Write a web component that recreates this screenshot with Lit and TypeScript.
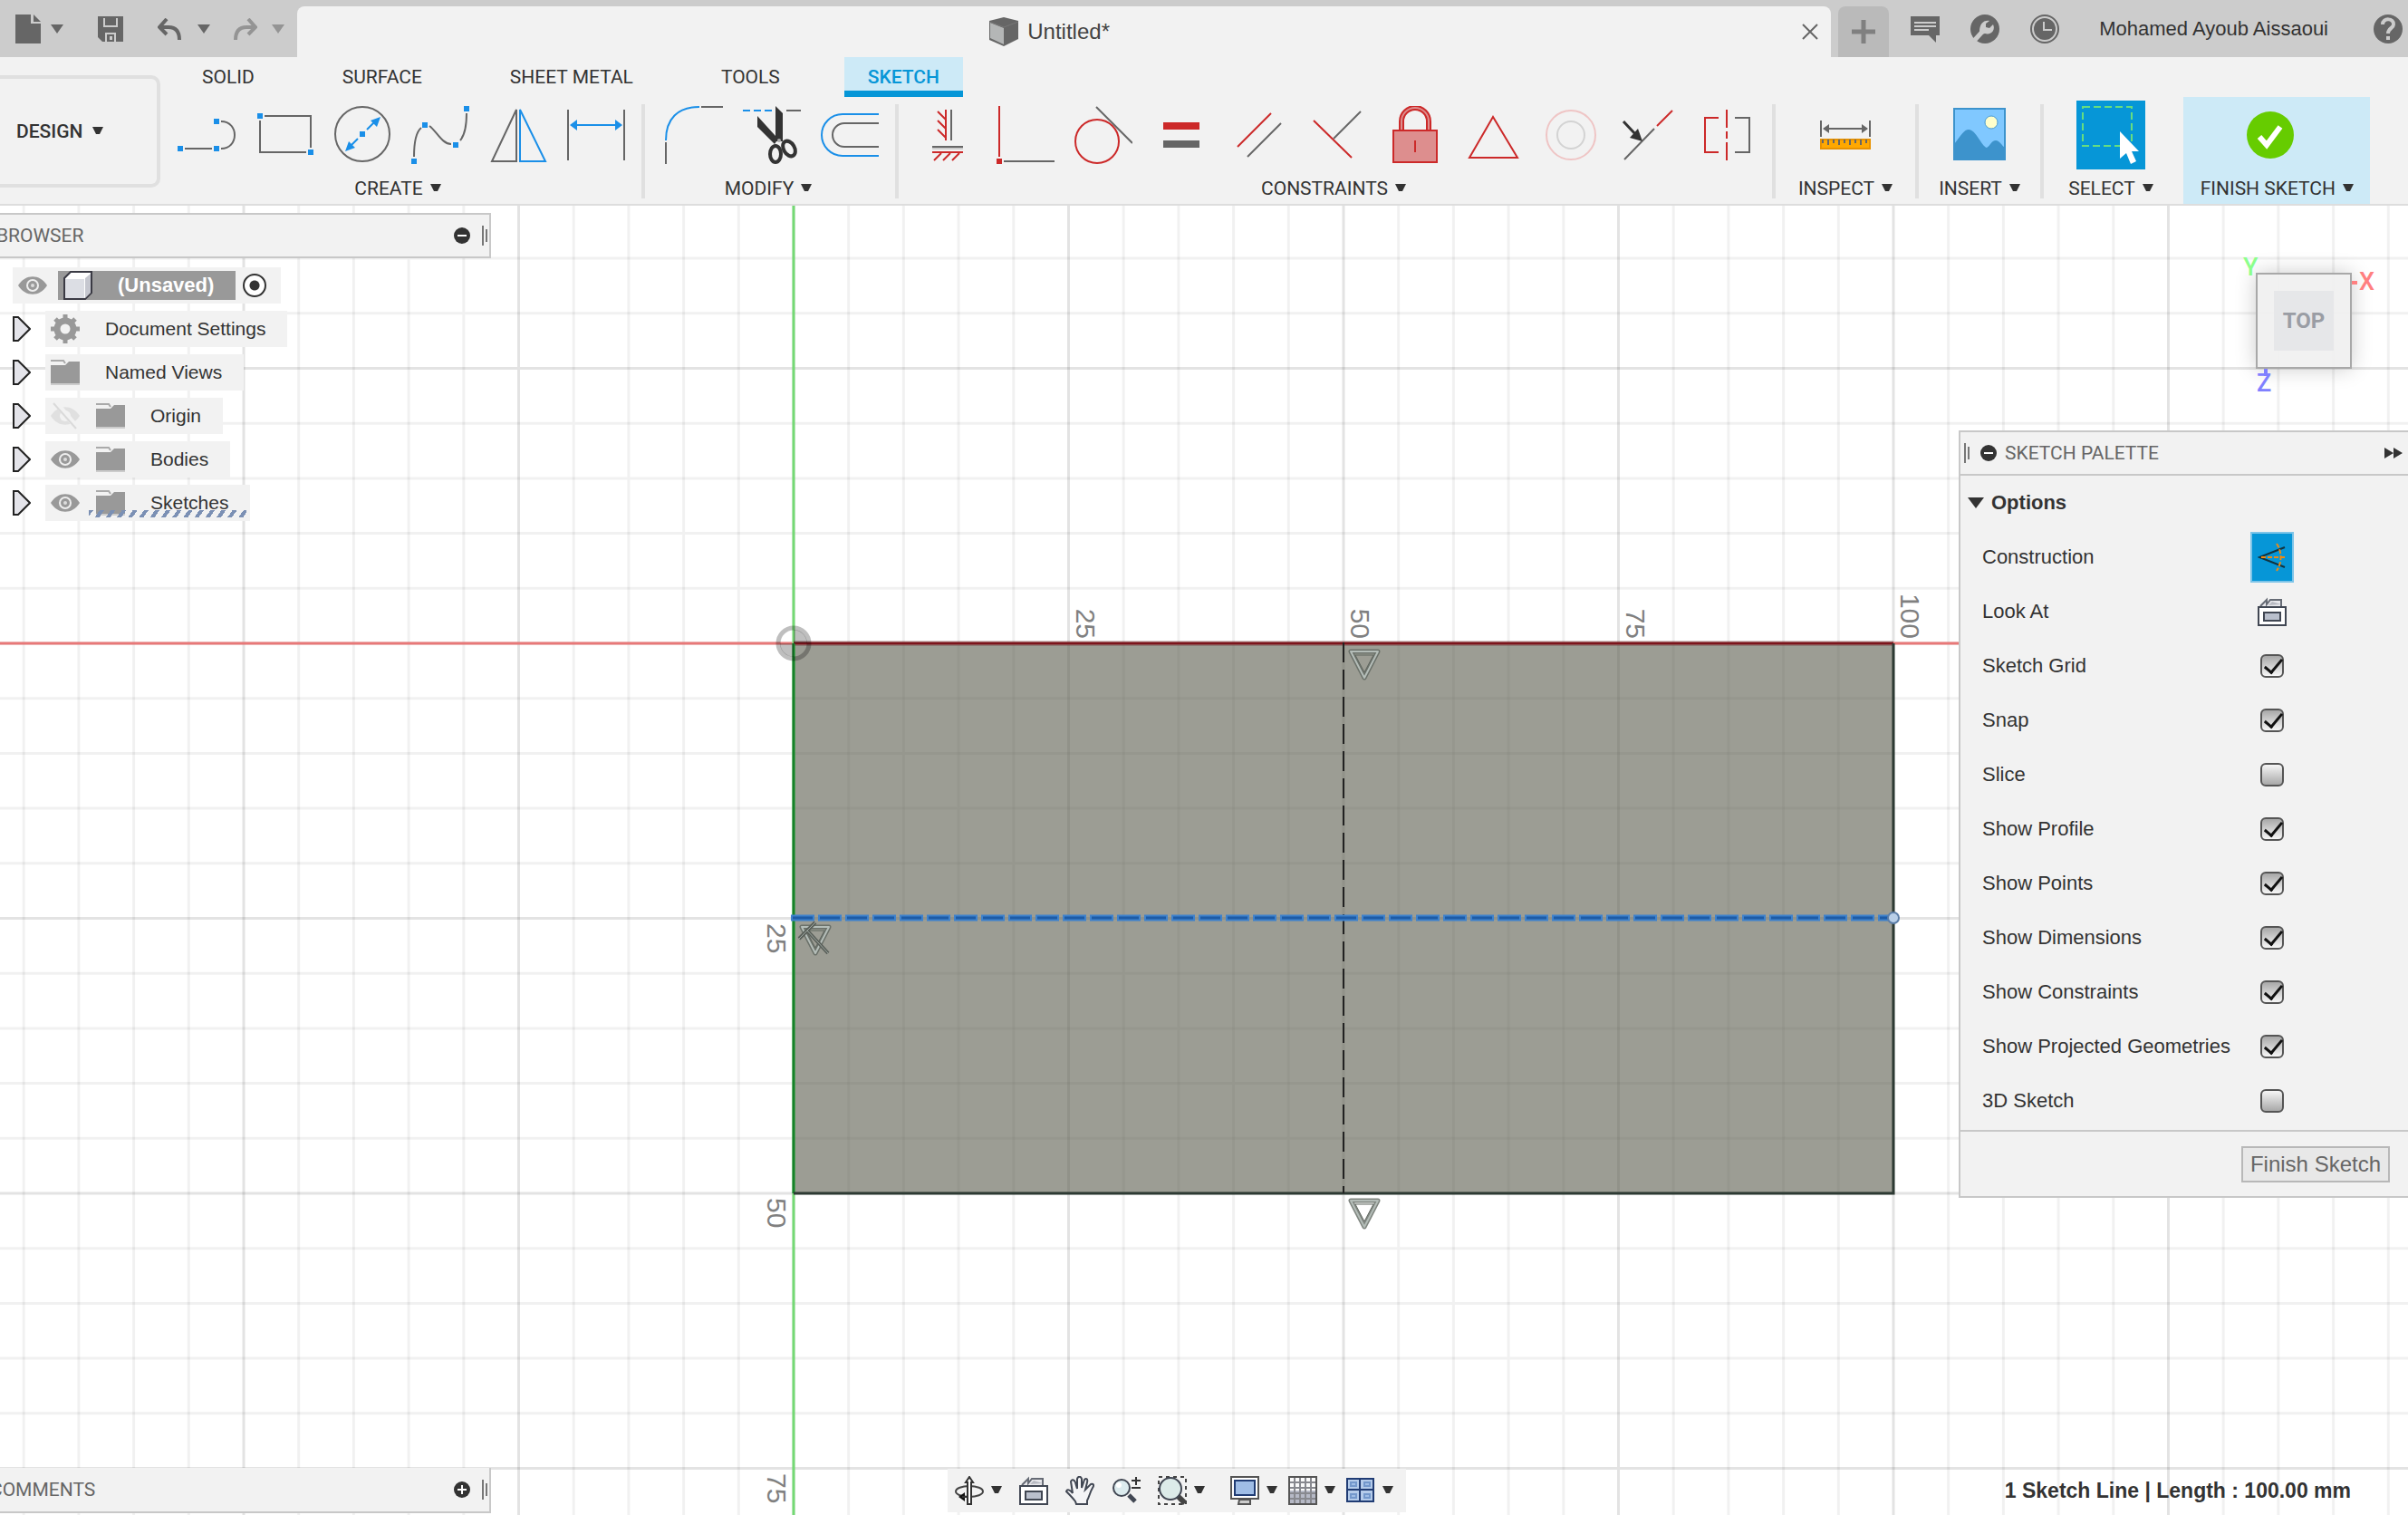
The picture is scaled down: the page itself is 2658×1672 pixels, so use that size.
import { LitElement, html, svg, css, nothing } from "lit";
import { customElement } from "lit/decorators.js";
import { classMap } from "lit/directives/class-map.js";

const G = "#666";
const B = "#1a8fe8";
const R = "#cc2929";
const D = "#333";

const sq = (x: number, y: number, c = B) => svg`<rect x=${x - 3} y=${y - 3} width="6" height="6" fill=${c} />`;

const toolArt: Record<string, unknown> = {
  line: svg`<path d="M8 47H38M48 17C68 17 68 47 48 47" fill="none" stroke=${G} stroke-width="2"/>${sq(3, 47)}${sq(43, 47)}${sq(43, 17)}`,
  rect: svg`<path d="M10 11H61V46M56 51H5V16" fill="none" stroke=${G} stroke-width="2"/>${sq(5, 11)}${sq(61, 51)}`,
  circle: svg`<circle cx="32" cy="31" r="30" fill="none" stroke=${G} stroke-width="2"/>
    <path d="M37 26L46 17M27 36L18 45" stroke=${B} stroke-width="2"/><path d="M52 12L41 16L48 23ZM13 50L17 39L24 46Z" fill=${B}/>${sq(32, 31)}`,
  spline: svg`<path d="M3 56C3 40 6 28 11 24M20 22C28 28 34 42 44 42M54 38C59 32 61 20 61 8" fill="none" stroke=${G} stroke-width="2"/>${sq(3, 61)}${sq(15, 21)}${sq(49, 43)}${sq(61, 3)}`,
  mirror: svg`<path d="M30 4L3 61H30Z" fill="none" stroke=${G} stroke-width="2"/><path d="M34 4V61H62Z" fill="none" stroke=${B} stroke-width="2"/>`,
  dimension: svg`<path d="M1 4V60M63 4V60" stroke=${G} stroke-width="2"/><path d="M6 21H58" stroke=${B} stroke-width="2"/><path d="M3 21L11 15V27ZM61 21L53 15V27Z" fill=${B}/>`,
  fillet: svg`<path d="M1 38C1 14 14 1 38 1" fill="none" stroke=${B} stroke-width="2"/><path d="M40 1H64M1 40V64" stroke=${G} stroke-width="2"/>`,
  trim: svg`<path d="M0 5H32" stroke=${B} stroke-width="2" stroke-dasharray="8 4"/><path d="M48 5H64" stroke=${G} stroke-width="2"/>
    <path d="M36 0L44 8V39H37L35 42L16 23V11L36 33Z" fill=${D}/><ellipse cx="36" cy="53" rx="6" ry="9" fill="none" stroke=${D} stroke-width="4"/>
    <ellipse cx="51" cy="47" rx="6" ry="9" transform="rotate(-30 51 47)" fill="none" stroke=${D} stroke-width="4"/><circle cx="40" cy="38" r="2" fill="#aaa"/>`,
  offset: svg`<path d="M64 9H24A23 23 0 0 0 24 55H64" fill="none" stroke=${B} stroke-width="2"/><path d="M64 19H26A13 13 0 0 0 26 45H64" fill="none" stroke=${G} stroke-width="2"/>`,
  horizVert: svg`<path d="M30 4V38M21 6L30 15M21 16L30 25M21 26L30 35M15 51H49M25 52L17 60M35 52L27 60M45 52L37 60" stroke=${R} stroke-width="2"/><path d="M15 47H49" stroke="#ccc" stroke-width="2"/><path d="M36 4V38M15 45H49" stroke=${G} stroke-width="2"/>`,
  coincident: svg`<path d="M3 0V56" stroke=${R} stroke-width="2"/><path d="M8 61H64" stroke=${G} stroke-width="2"/>${sq(3, 61, R)}`,
  tangent: svg`<circle cx="25" cy="39" r="24" fill="none" stroke=${R} stroke-width="2"/><path d="M24 1L64 41" stroke=${G} stroke-width="2"/>`,
  equal: svg`<path d="M12 22H52" stroke=${R} stroke-width="8"/><path d="M12 42H52" stroke=${G} stroke-width="8"/>`,
  parallel: svg`<path d="M8 45L45 8" stroke=${R} stroke-width="2"/><path d="M19 56L56 19" stroke=${G} stroke-width="2"/>`,
  perpendicular: svg`<path d="M6 16L48 57" stroke=${R} stroke-width="2"/><path d="M28 36L58 6" stroke=${G} stroke-width="2"/>`,
  lock: svg`<path d="M17 27V17A15 15 0 0 1 47 17V27" fill="none" stroke=${R} stroke-width="6"/><path d="M17 27V17A15 15 0 0 1 47 17V27" fill="none" stroke="#dd8e8e" stroke-width="2"/>
    <rect x="8" y="27" width="48" height="35" fill="#dd8e8e" stroke=${R} stroke-width="2"/><path d="M32 38V51" stroke=${R} stroke-width="2"/>`,
  triangle: svg`<path d="M32 12L6 57H59Z" fill="none" stroke=${R} stroke-width="2"/>`,
  concentric: svg`<circle cx="32" cy="32" r="27" fill="none" stroke="#efc5c5" stroke-width="2"/><circle cx="32" cy="32" r="15" fill="none" stroke="#d3d3d3" stroke-width="2"/>`,
  midpoint: svg`<path d="M5 59L38 25" stroke=${G} stroke-width="2"/><path d="M41 22L58 5" stroke=${R} stroke-width="2"/><path d="M4 17L18 32" stroke=${D} stroke-width="3"/><path d="M25 39L11 35L20 25Z" fill=${D}/>`,
  symmetry: svg`<path d="M23 13H8V51H23M32 4V24M32 28V36M32 40V60" fill="none" stroke=${R} stroke-width="2"/><path d="M41 13H57V51H41" fill="none" stroke=${G} stroke-width="2"/>`,
  measure: svg`<path d="M5 16V34M59 16V34M8 25H56" stroke=${G} stroke-width="2"/><path d="M7 25L14 20V30ZM57 25L50 20V30Z" fill=${G}/><rect x="5" y="37" width="54" height="10" fill="#ffa800" stroke="#e89200" stroke-width="2"/>
    <path d="M7 37V41M13 37V43M19 37V41M25 37V43M31 37V41M37 37V43M43 37V41M49 37V43M55 37V41" stroke=${G} stroke-width="2"/>`,
  picture: svg`<rect x="4" y="3" width="56" height="56" fill="#80c8ff" stroke="#3d93cc" stroke-width="2"/><circle cx="45" cy="18" r="7" fill="#ffffcc" stroke="#4d9bd0" stroke-width="1"/>
    <path d="M4 42C12 32 15 26 20 26C28 26 34 44 40 46C44 44 45 38 50 38C54 38 57 44 60 46V60H4Z" fill="#3d93cc"/>`,
  finish: svg`<circle cx="32" cy="32" r="26" fill="#66cc00"/><path d="M20 34L28 43L43 23" fill="none" stroke="#fff" stroke-width="6"/>`,
};

const tool = (name: string, title: string) => html`<button class="tool" title=${title} aria-label=${title}><svg width="64" height="64" viewBox="0 0 64 64">${toolArt[name]}</svg></button>`;
const caret = html`<svg class="caret" width="12" height="10" viewBox="0 0 12 10"><path d="M0 0H12L8 8H4Z" fill="currentColor"/></svg>`;

const arrowDown = html`<svg width="14" height="10" viewBox="0 0 14 10"><path d="M0 0H14L7 10Z" fill="currentColor"/></svg>`;

const eye = svg`<path d="M0 16C8 3 24 3 32 16C24 29 8 29 0 16Z" fill="#999"/><circle cx="16" cy="16" r="7" fill="#eee"/><circle cx="16" cy="16" r="5" fill="#999"/><circle cx="16" cy="16" r="2" fill="#ddd"/>`;
const treeArt: Record<string, unknown> = {
  eye,
  hidden: svg`<path d="M0 16C8 3 24 3 32 16C24 29 8 29 0 16Z" fill="#e0e0e0"/><circle cx="16" cy="16" r="6" fill="#f2f2f2"/><path d="M6 2L30 30" stroke="#f2f2f2" stroke-width="6"/><path d="M3 2L28 30" stroke="#dadada" stroke-width="2"/>`,
  gear: svg`<circle cx="16" cy="16" r="9" fill="none" stroke="#999" stroke-width="7"/><path d="M16 0V5M16 27V32M0 16H5M27 16H32M5 5L8 8M24 24L27 27M27 5L24 8M5 27L8 24" stroke="#999" stroke-width="5"/>`,
  folder: svg`<path d="M0 3H14L16 6" fill="none" stroke="#aaa" stroke-width="2"/><path d="M0 8H16L20 4H32V28H0Z" fill="#999"/><path d="M0 29H32" stroke="#ccc" stroke-width="2"/>`,
  cube: svg`<path d="M1 8L8 1H31V24L24 31H1Z" fill="#fff" stroke="#3a3a44" stroke-width="2"/><path d="M2 9H23V30H2Z" fill="#dcdee4"/><path d="M24 8L30 3V24L24 30Z" fill="#c5c7cf"/>`,
};
const tIcon = (n: string) => html`<svg width="32" height="32" viewBox="0 0 32 32">${treeArt[n]}</svg>`;

const lookAt = svg`<path d="M3 10L10 3V8L14 3H26V10" fill="#e8e8ec" stroke="#666b75" stroke-width="2"/><path d="M12 9L16 5L26 8" fill="#b8bac2"/><rect x="1" y="11" width="30" height="20" fill="#fff" stroke="#414753" stroke-width="2"/><rect x="7" y="17" width="18" height="9" fill="#b9bfcc" stroke="#414753" stroke-width="2"/>`;

const navArt: Record<string, unknown> = {
  orbit: svg`<ellipse cx="16" cy="17" rx="15" ry="6" fill="none" stroke="#444" stroke-width="2"/><path d="M14 31V7H12L16 1L20 7H18V31Z" fill="#fff" stroke="#333" stroke-width="2"/><path d="M4 23L11 18V28Z" fill="#111"/><path d="M8 23H13" stroke="#333" stroke-width="2"/>`,
  look: lookAt,
  pan: svg`<path d="M11 28C8 24 4 20 1 17C2 14 5 15 8 19L6 6C7 3 10 4 11 7L13 14V3C14 0 17 0 18 3V13L21 4C23 2 25 3 24 7L22 15L28 9C31 8 32 10 30 13C27 18 26 24 24 27V31H12Z" fill="#f4f4f6" stroke="#414753" stroke-width="2"/>`,
  zoom: svg`<path d="M19 21L26 28" stroke="#414753" stroke-width="5"/><circle cx="11" cy="13" r="9" fill="#dcebee" stroke="#414753" stroke-width="2"/><circle cx="8" cy="10" r="3" fill="#fff"/><path d="M27 1V10M22 5H32M22 13H32" stroke="#333" stroke-width="2"/>`,
  window: svg`<rect x="1" y="1" width="30" height="30" fill="none" stroke="#444" stroke-width="2" stroke-dasharray="4 4"/><path d="M22 22L30 30" stroke="#444" stroke-width="6"/><circle cx="14" cy="14" r="12" fill="#dcebe9" stroke="#414753" stroke-width="2"/>`,
  display: svg`<path d="M10 26H22V31H9Z" fill="#ccc" stroke="#555" stroke-width="2"/><rect x="1" y="1" width="30" height="24" fill="#fff" stroke="#555" stroke-width="2"/><rect x="5" y="5" width="22" height="16" fill="#9fbde6" stroke="#203c74" stroke-width="2"/>`,
  grid: svg`<rect x="1" y="1" width="30" height="30" fill="#fafafa" stroke="#555" stroke-width="2"/><path d="M2 16H30V30H2Z" fill="#b6b9c6"/><path d="M7 2V30M13 2V30M19 2V30M25 2V30M2 7H30M2 13H30M2 19H30M2 25H30" stroke="#88898f" stroke-width="2"/>`,
  views: svg`<rect x="1" y="3" width="29" height="25" fill="#b4cbea" stroke="#203c74" stroke-width="2"/><path d="M15 3V28M1 15H30" stroke="#203c74" stroke-width="2"/><path d="M5 7H11V11H5ZM20 7H26V11H20ZM5 20H11V24H5ZM20 20H26V24H20Z" fill="#9fbde6" stroke="#7398cc" stroke-width="2"/>`,
};
const nav = (n: string, title: string, menu = false) => html`<button class="nav-btn" title=${title} aria-label=${title}>
  <svg width="32" height="32" viewBox="0 0 32 32">${navArt[n]}</svg>${menu ? caret : nothing}</button>`;

const minus = html`<svg width="18" height="18" viewBox="0 0 18 18"><circle cx="9" cy="9" r="9" fill="#333"/><path d="M4 9H14" stroke="#fff" stroke-width="2"/></svg>`;
const plus = html`<svg width="18" height="18" viewBox="0 0 18 18"><circle cx="9" cy="9" r="9" fill="#333"/><path d="M4 9H14M9 4V14" stroke="#fff" stroke-width="2"/></svg>`;
const grip = html`<svg class="grip" width="6" height="22" viewBox="0 0 6 22"><path d="M1 0V22M5 4V18" stroke="#777" stroke-width="2"/></svg>`;

const UNIT = 303.5 / 25;

const glyphTriangle = (x: number, y: number) => svg`<g transform="translate(${x} ${y})">
  <path d="M2 2H32L17 31Z" fill="none" stroke="#5f665f" stroke-opacity=".8" stroke-width="5" stroke-linejoin="round"/>
  <path d="M2 2H32L17 31Z" fill="none" stroke="#b4bdb8" stroke-width="2" stroke-linejoin="round"/>
  <path d="M7 6H27L17 25Z" fill="none" stroke="#5f665f" stroke-width="1"/></g>`;

@customElement("sketch-canvas")
export class SketchCanvas extends LitElement {
  static styles = css`
    :host { display: block; overflow: hidden; background: #fff; }
    svg { display: block; width: 100%; height: 100%; }
    .mark { font-family: "Liberation Sans", Arial, sans-serif; font-size: 30px; fill: #808080; }
  `;

  render() {
    const minor: unknown[] = [];
    const major: unknown[] = [];
    for (let i = -40; i <= 60; i++) {
      const p = i * 5 * UNIT;
      (i % 5 === 0 ? major : minor).push(svg`<path d="M${p} -2000V4000M-3000 ${p}H5000"/>`);
    }
    const w = 100 * UNIT;
    const h = 50 * UNIT;
    return html`<svg role="img" aria-label="Sketch">
      <g transform="translate(876 483)">
        <g stroke="#000" stroke-opacity=".055" stroke-width="3">${minor}</g>
        <g stroke="#000" stroke-opacity=".11" stroke-width="3">${major}</g>
        <rect width=${w} height=${h} fill="#5a5c4c" fill-opacity=".6"/>
        <path d="M-3000 0H5000" stroke="#e87878" stroke-width="3"/>
        <path d="M0 -2000V4000" stroke="#74d974" stroke-width="3"/>
        <path d="M0 0H${w}" stroke="#5a1a1e" stroke-opacity=".5" stroke-width="5"/>
        <path d="M0 0H${w}" stroke="#7c141c" stroke-width="2"/>
        <path d="M0 0V${h}" stroke="#16802a" stroke-width="3"/>
        <path d="M0 ${h}H${w}V0" fill="none" stroke="#2d3a33" stroke-width="3"/>
        <path d="M607 -1V${h}" stroke="#222" stroke-width="2" stroke-dasharray="22 8"/>
        <circle r="17" fill="none" stroke="#000" stroke-opacity=".25" stroke-width="5"/>
        <path d="M0 0V-15A15 15 0 0 1 15 0ZM0 0V15A15 15 0 0 1 -15 0Z" fill="#000" fill-opacity=".25"/>
        <path d="M-3 303H${w}" stroke="#3f82cc" stroke-width="7" stroke-dasharray="26 4"/>
        <path d="M-1 303H${w}" stroke="#1d5ba6" stroke-width="3" stroke-dasharray="22 8"/>
        <circle cx=${w} cy="303" r="6" fill="#b9cfe8" stroke="#5c7ea8" stroke-width="2"/>
        ${glyphTriangle(613, 7)}${glyphTriangle(613, 613)}${glyphTriangle(7, 311)}
        <path d="M6 326L24 308M15 317L38 342" stroke="#5a605a" stroke-width="4"/>
        <path d="M6 326L24 308M15 317L38 342" stroke="#9aa39d" stroke-width="1"/>
        ${[25, 50, 75, 100].map((n) => svg`<text class="mark" text-anchor="end" transform="translate(${Math.round(n * UNIT) + 8} -5) rotate(90)">${n}</text>`)}
        ${[25, 50, 75].map((n) => svg`<text class="mark" transform="translate(-29 ${Math.round(n * UNIT) + 5}) rotate(90)">${n}</text>`)}
      </g></svg>`;
  }
}

const options: [string, boolean][] = [
  ["Sketch Grid", true], ["Snap", true], ["Slice", false], ["Show Profile", true], ["Show Points", true],
  ["Show Dimensions", true], ["Show Constraints", true], ["Show Projected Geometries", true], ["3D Sketch", false],
];

const tree: { name: string; icons: string[]; active?: boolean }[] = [
  { name: "Document Settings", icons: ["gear"] },
  { name: "Named Views", icons: ["folder"] },
  { name: "Origin", icons: ["hidden", "folder"] },
  { name: "Bodies", icons: ["eye", "folder"] },
  { name: "Sketches", icons: ["eye", "folder"], active: true },
];

@customElement("app-root")
export class AppRoot extends LitElement {
  static styles = css`
    :host { display: flex; flex-direction: column; min-height: 100vh; overflow: hidden; font-family: "Liberation Sans", Arial, sans-serif; font-size: 21px; line-height: 24px; color: #333; background: #f2f2f2; }
    * { box-sizing: border-box; }
    button { font: inherit; color: inherit; background: none; border: 0; padding: 0; margin: 0; }
    svg { display: block; flex: none; }
    .caps { font-family: Roboto, "Liberation Sans", sans-serif; font-size: 21px; white-space: nowrap; }

    .titlebar { display: flex; height: 63px; background: #ccc; color: #666; }
    .quick { display: flex; align-items: center; width: 328px; padding-left: 17px; flex: none; }
    .quick button { display: flex; align-items: center; gap: 11px; margin-right: 38px; }
    .quick .undo { margin-right: 26px; gap: 18px; }
    .quick .redo { margin-right: 0; color: #949494; gap: 16px; }
    .doc { display: flex; align-items: center; flex: 1; margin-top: 7px; border-radius: 8px 8px 0 0; background: #f2f2f2; padding-right: 14px; }
    .doc-name { flex: 1; display: flex; align-items: center; justify-content: center; gap: 10px; font-size: 24px; color: #444; }
    .new-doc { display: grid; place-items: center; width: 56px; margin: 7px 0 0 8px; border-radius: 8px 8px 0 0; background: #bababa; }
    .account { display: flex; align-items: center; gap: 34px; padding: 0 6px 0 24px; }
    .account .user { margin: 0 0 0 10px; color: #333; font-size: 22px; white-space: nowrap; }

    .ribbon { display: flex; align-items: flex-start; border-bottom: 2px solid #ddd; height: 164px; }
    .workspace { display: flex; align-items: center; gap: 11px; width: 177px; height: 124px; margin: 20px 8px 0 0; padding-left: 18px; border: 4px solid #e0e0e0; border-left: 0; border-radius: 0 10px 10px 0; flex: none; font-weight: 500; }
    .ribbon-main { flex: 1; min-width: 0; }
    .tabs { display: flex; gap: 45px; padding-left: 12px; height: 44px; }
    .tabs button { padding: 6px 26px 0; border-bottom: 7px solid transparent; }
    .tabs .on { background: #cdeaf7; color: #0696d7; border-bottom-color: #0696d7; font-weight: 500; }
    .groups { display: flex; height: 118px; }
    .group { position: relative; display: flex; flex-direction: column; align-items: center; justify-content: space-between; padding: 10px 18px 4px 4px; }
    .group.first { padding-left: 0; }
    .group.short { padding: 10px 4px 4px 0; }
    .group::after { content: ""; position: absolute; right: 7px; top: 8px; width: 4px; height: 104px; background: #e0e0e0; }
    .group.short::after { right: 0; }
    .group.last::after { display: none; }
    .row { display: flex; height: 64px; align-items: center; }
    .tool { display: grid; place-items: center; width: 86px; height: 64px; }
    .menu { display: flex; align-items: center; gap: 8px; height: 26px; margin-right: 8px; }
    .short .menu { margin-right: 0; }
    .inspect { width: 158px; margin-left: -7px; }
    .insert { width: 138px; }
    .select { width: 152px; }
    .finish { width: 206px; margin-left: 2px; background: #cdeaf7; }
    .group.finish { padding: 10px 14px 4px 0; }
    .group.finish .menu { align-self: flex-end; margin-right: 4px; }
    .caret { color: #333; }

    .stage { position: relative; flex: 1; display: flex; flex-direction: column; justify-content: space-between; }
    sketch-canvas { position: absolute; inset: 0; }
    .upper { position: relative; display: flex; justify-content: space-between; align-items: flex-start; }
    .left { width: 542px; padding-top: 8px; }
    .bar { display: flex; align-items: center; height: 50px; width: 542px; gap: 13px; padding-right: 2px; background: #f2f2f2; border: 2px solid #c8c8c8; border-left: 0; color: #666; overflow: hidden; }
    .bar h2 { flex: 1; margin: 0 0 0 -4px; font-weight: 400; }
    .tree { list-style: none; margin: 10px 0 0; padding: 0 0 0 14px; display: flex; flex-direction: column; gap: 8px; }
    .tree li { display: flex; align-items: center; height: 40px; }
    .chip { position: relative; display: flex; align-items: center; gap: 18px; height: 40px; padding: 0 24px 0 6px; background: #f2f2f2; }
    .chip .name { margin-left: 10px; }
    .expand { width: 36px; }
    .chip.root { gap: 12px; padding-right: 16px; }
    .doc-chip { display: flex; align-items: center; gap: 28px; height: 32px; padding: 0 24px 0 6px; background: #999; color: #fff; font-weight: 700; font-size: 22px; }
    input { appearance: none; margin: 0; flex: none; }
    .activate { width: 26px; height: 26px; margin-left: -4px; border: 2px solid #333; border-radius: 50%; background: radial-gradient(circle, #333 5px, #fff 6px); }
    .squiggle { position: absolute; left: 48px; right: 4px; bottom: 4px; height: 8px; background: repeating-linear-gradient(125deg, #7b90b4 0 4px, transparent 4px 10px); }

    .right { display: flex; flex-direction: column; align-items: flex-end; width: 496px; padding-top: 74px; }
    .viewcube { position: relative; width: 106px; height: 106px; margin-right: 62px; display: grid; place-items: center; background: #f0f0f0e6; border: 2px solid #a8a8a8; box-shadow: 0 0 22px #0003; }
    .face { display: grid; place-items: center; width: 66px; height: 66px; background: #e6e7e9; color: #9a9da4; font: 700 24px/24px Roboto, sans-serif; }
    .axis { position: absolute; font: 500 27px/28px Roboto, sans-serif; }
    .ax-y { left: -16px; top: -22px; color: #8cff8c; }
    .ax-x { left: 112px; top: -6px; color: #ff8080; }
    .ax-x::before { content: ""; position: absolute; left: -8px; top: 13px; width: 6px; height: 4px; background: #ff8080; }
    .ax-z { left: -1px; top: 106px; color: #8080ff; }
    .ax-z::before { content: ""; position: absolute; left: 8px; top: -2px; width: 4px; height: 8px; background: #8080ff; }
    .palette { width: 496px; margin-top: 68px; background: #f2f2f2; border: 2px solid #c8c8c8; border-right: 0; }
    .palette header { display: flex; align-items: center; height: 48px; padding: 0 6px 0 4px; border-bottom: 2px solid #c8c8c8; color: #666; }
    .palette header .caps { flex: 1; margin: 0 0 0 9px; font-weight: 400; }
    .palette header .grip { margin-right: 12px; }
    .fold { display: flex; align-items: center; gap: 8px; height: 60px; padding-left: 8px; font-weight: 700; font-size: 22px; }
    .opt { display: grid; grid-template-columns: 1fr 48px 126px; align-items: center; height: 60px; padding-left: 24px; font-size: 22px; justify-items: center; }
    .opt label, .opt span { justify-self: start; }
    .opt button { display: grid; place-items: center; width: 48px; height: 56px; }
    .opt .toggled { background: #0696d7; border: 2px solid #7dc4e8; }
    .check { position: relative; width: 26px; height: 26px; border: 2px solid #555; border-radius: 6px; background: linear-gradient(#f6f6f6, #a8a8a8); }
    .check:checked { background: linear-gradient(#a8a8a8, #f6f6f6); }
    .check:checked::before { content: ""; position: absolute; left: 7px; top: -1px; width: 8px; height: 17px; border: solid #111; border-width: 0 3px 3px 0; transform: rotate(40deg); }
    .foot { display: flex; justify-content: flex-end; align-items: center; height: 73px; margin-top: 2px; padding-right: 20px; border-top: 2px solid #c8c8c8; }
    .foot button { height: 40px; padding: 0 8px; border: 2px solid #b8b8b8; background: #e8e8e8; color: #666; font-size: 24px; }

    .lower { position: relative; display: grid; grid-template-columns: auto 16fr auto 21fr auto; align-items: center; padding-bottom: 2px; }
    .lower .bar { border-top: 0; }
    .lower .bar h2 { margin-left: -11px; }
    .navbar { grid-column: 3; display: flex; align-items: center; gap: 19px; height: 48px; width: 506px; padding-left: 8px; background: #f2f2f2; }
    .nav-btn { display: flex; align-items: center; gap: 8px; }
    .navbar .late { margin-left: 9px; display: flex; gap: 12px; }
    .status { grid-column: 5; margin: 0; padding-right: 63px; font-weight: 700; font-size: 23px; white-space: nowrap; }
  `;

  private group(label: string, cls: Record<string, boolean>, body: unknown) {
    return html`<section class=${classMap({ group: true, ...cls })} aria-label=${label}>
      <div class="row">${body}</div><button class="menu caps">${label}${caret}</button></section>`;
  }

  render() {
    return html`
      <div class="titlebar">
        <div class="quick">
          <button aria-label="File"><svg width="28" height="32" viewBox="0 0 28 32"><path d="M0 0H17V10H28V32H0Z" fill="#666"/><path d="M20 0L28 8H20Z" fill="#666"/></svg>${arrowDown}</button>
          <button aria-label="Save"><svg width="28" height="28" viewBox="0 0 28 28"><path d="M0 0H28V28H5L0 23Z" fill="#666"/><path d="M7 2V11H21V2M9 28V19H19V28" fill="none" stroke="#ccc" stroke-width="2"/><path d="M13 22H16V26H13Z" fill="#ccc"/></svg></button>
          <button class="undo" aria-label="Undo"><svg width="26" height="24" viewBox="0 0 26 24"><path d="M10 1L2 10L10 18M2 10H12C20 10 24 15 24 24" fill="none" stroke="currentColor" stroke-width="4"/></svg>${arrowDown}</button>
          <button class="redo" aria-label="Redo"><svg width="26" height="24" viewBox="0 0 26 24"><path d="M16 1L24 10L16 18M24 10H14C6 10 2 15 2 24" fill="none" stroke="currentColor" stroke-width="4"/></svg>${arrowDown}</button>
        </div>
        <div class="doc">
          <div class="doc-name"><svg width="32" height="32" viewBox="0 0 32 32"><path d="M0 4L16 0L32 4V24L16 32L0 25Z" fill="#666"/><path d="M1 6L16 12V30L1 23Z" fill="#b4b6b6"/><path d="M0 5L16 11L32 5" fill="none" stroke="#777" stroke-width="1"/></svg>Untitled*</div>
          <button aria-label="Close"><svg width="18" height="18" viewBox="0 0 18 18"><path d="M1 1L17 17M17 1L1 17" stroke="#666" stroke-width="2"/></svg></button>
        </div>
        <button class="new-doc" aria-label="New design"><svg width="26" height="26" viewBox="0 0 26 26"><path d="M0 13H26M13 0V26" stroke="#808080" stroke-width="5"/></svg></button>
        <div class="account">
          <button aria-label="Notifications"><svg width="32" height="32" viewBox="0 0 32 32"><path d="M0 2H32V23H28V31L20 23H0Z" fill="#666"/><path d="M4 9H28M4 13H28M4 17H20" stroke="#ccc" stroke-width="2"/></svg></button>
          <button aria-label="Extensions"><svg width="32" height="32" viewBox="0 0 32 32"><circle cx="16" cy="16" r="16" fill="#666"/><path d="M4 29L14 18" stroke="#ccc" stroke-width="5"/><path d="M21 7L17 10V14L21 15L25 11C28 17 23 23 16 21L12 22L10 19C10 11 14 6 21 7Z" fill="#ccc"/></svg></button>
          <button aria-label="Job status"><svg width="32" height="32" viewBox="0 0 32 32"><circle cx="16" cy="16" r="15" fill="none" stroke="#666" stroke-width="2"/><circle cx="16" cy="16" r="12" fill="#666"/><path d="M15 8V17H24" fill="none" stroke="#ccc" stroke-width="2"/></svg></button>
          <span class="user">Mohamed Ayoub Aissaoui</span>
          <button class="help" aria-label="Help"><svg width="48" height="32" viewBox="-16 0 48 32"><circle cx="16" cy="16" r="16" fill="#666"/><path d="M10 11C10 3 23 4 22 11C22 15 16 15 16 21M16 24V28" fill="none" stroke="#ccc" stroke-width="4"/></svg></button>
        </div>
      </div>

      <div class="ribbon">
        <button class="workspace caps">DESIGN ${caret}</button>
        <div class="ribbon-main">
          <nav class="tabs">${["SOLID", "SURFACE", "SHEET METAL", "TOOLS", "SKETCH"].map((t) => html`<button class=${classMap({ caps: true, on: t === "SKETCH" })}>${t}</button>`)}</nav>
          <div class="groups">
            ${this.group("CREATE", { first: true }, [tool("line", "Line"), tool("rect", "Rectangle"), tool("circle", "Circle"), tool("spline", "Spline"), tool("mirror", "Mirror"), tool("dimension", "Sketch Dimension")])}
            ${this.group("MODIFY", {}, [tool("fillet", "Fillet"), tool("trim", "Trim"), tool("offset", "Offset")])}
            ${this.group("CONSTRAINTS", {}, [tool("horizVert", "Horizontal/Vertical"), tool("coincident", "Coincident"), tool("tangent", "Tangent"), tool("equal", "Equal"), tool("parallel", "Parallel"), tool("perpendicular", "Perpendicular"), tool("lock", "Fix"), tool("triangle", "Polygon"), tool("concentric", "Concentric"), tool("midpoint", "Midpoint"), tool("symmetry", "Symmetry")])}
            ${this.group("INSPECT", { short: true, inspect: true }, tool("measure", "Measure"))}
            ${this.group("INSERT", { short: true, insert: true }, tool("picture", "Canvas"))}
            ${this.group("SELECT", { short: true, select: true, last: true }, html`<button aria-label="Select"><svg width="76" height="76" viewBox="0 0 76 76"><rect width="76" height="76" fill="#0696d7"/><rect x="7" y="7" width="54" height="43" fill="none" stroke="#66dd80" stroke-width="2" stroke-dasharray="8 4"/><path d="M48 34V64L55 58L60 70L66 67L61 56H69Z" fill="#fff"/></svg></button>`)}
            ${this.group("FINISH SKETCH", { finish: true, last: true }, tool("finish", "Finish Sketch"))}
          </div>
        </div>
      </div>

      <main class="stage">
        <sketch-canvas></sketch-canvas>
        <div class="upper">
          <div class="left">
            <div class="bar"><h2 class="caps">BROWSER</h2><button aria-label="Collapse browser">${minus}</button>${grip}</div>
            <ul class="tree">
              <li><div class="chip root">${tIcon("eye")}<div class="doc-chip">${tIcon("cube")}<span>(Unsaved)</span></div><input class="activate" type="radio" name="active" checked aria-label="Activate (Unsaved)"></div></li>
              ${tree.map((n) => html`<li><button class="expand" aria-label="Expand ${n.name}"><svg width="20" height="28" viewBox="0 0 20 28"><path d="M1 1H6L19 14L6 27H1Z" fill="#e4e4ea" stroke="#222" stroke-width="2"/></svg></button>
                <div class="chip">${n.icons.map(tIcon)}<span class="name">${n.name}</span>${n.active ? html`<i class="squiggle"></i>` : nothing}</div></li>`)}
            </ul>
          </div>
          <div class="right">
            <div class="viewcube"><div class="face">TOP</div><span class="axis ax-x">X</span><span class="axis ax-y">Y</span><span class="axis ax-z">Z</span></div>
            <section class="palette">
              <header>${grip}<button aria-label="Collapse palette">${minus}</button><h2 class="caps">SKETCH PALETTE</h2><button aria-label="Dock palette"><svg width="20" height="14" viewBox="0 0 20 14"><path d="M0 1L10 7L0 13ZM10 1L20 7L10 13Z" fill="#333"/></svg></button></header>
              <button class="fold"><svg width="18" height="12" viewBox="0 0 18 12"><path d="M0 0H18L9 12Z" fill="#333"/></svg>Options</button>
              <div class="opt"><span>Construction</span><button class="toggled" aria-label="Construction" aria-pressed="true"><svg width="32" height="32" viewBox="0 0 32 32"><path d="M30 5L2 16L30 27" fill="none" stroke="#12333f" stroke-width="2"/><path d="M4 16H32M21 1C27 10 27 22 21 31" fill="none" stroke="#f08a10" stroke-width="2" stroke-dasharray="5 2"/></svg></button></div>
              <div class="opt"><span>Look At</span><button aria-label="Look At"><svg width="32" height="32" viewBox="0 0 32 32">${lookAt}</svg></button></div>
              ${options.map(([name, on], i) => html`<div class="opt"><label for="opt-${i}">${name}</label><input class="check" type="checkbox" id="opt-${i}" ?checked=${on}></div>`)}
              <div class="foot"><button>Finish Sketch</button></div>
            </section>
          </div>
        </div>
        <div class="lower">
          <div class="bar"><h2 class="caps">COMMENTS</h2><button aria-label="Expand comments">${plus}</button>${grip}</div>
          <div class="navbar">${nav("orbit", "Orbit", true)}${nav("look", "Look At")}${nav("pan", "Pan")}${nav("zoom", "Zoom")}${nav("window", "Zoom Window", true)}<div class="late">${nav("display", "Display Settings", true)}${nav("grid", "Grid and Snaps", true)}${nav("views", "Viewports", true)}</div></div>
          <p class="status">1 Sketch Line | Length : 100.00 mm</p>
        </div>
      </main>`;
  }
}
